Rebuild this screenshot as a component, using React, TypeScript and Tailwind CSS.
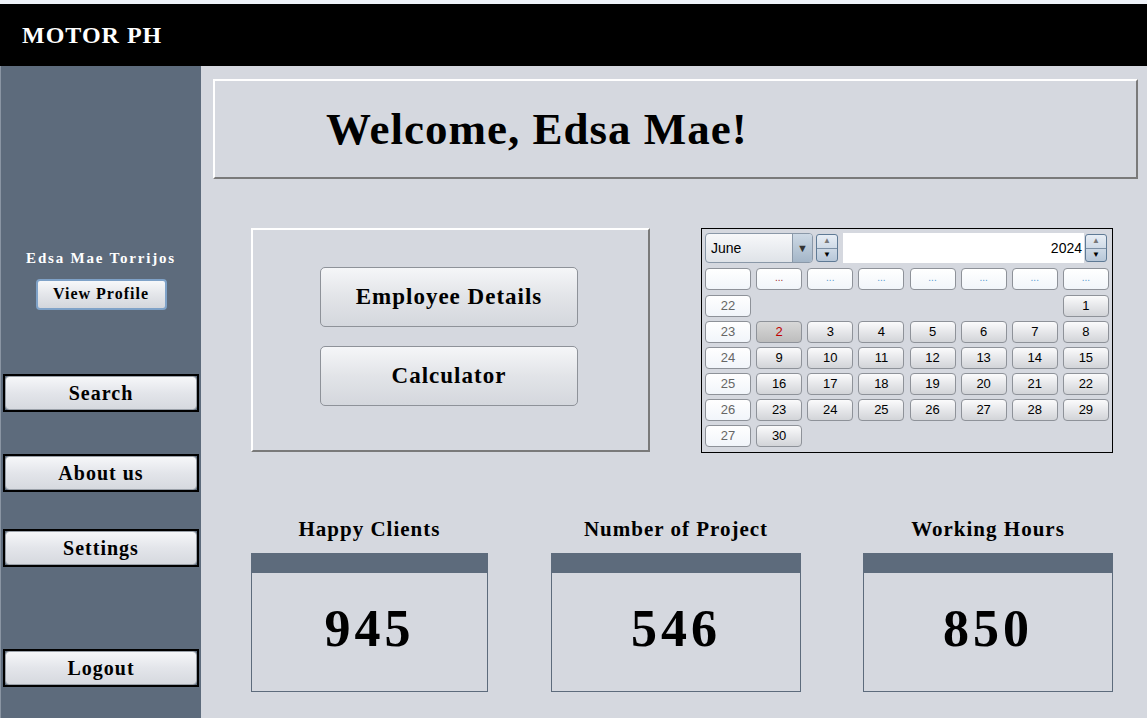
import React from "react";

const serif = { fontFamily: '"Liberation Serif", "DejaVu Serif", serif' };
const sans = { fontFamily: '"Liberation Sans", Arial, sans-serif' };

const days = [
  [null, null, null, null, null, null, 1],
  [2, 3, 4, 5, 6, 7, 8],
  [9, 10, 11, 12, 13, 14, 15],
  [16, 17, 18, 19, 20, 21, 22],
  [23, 24, 25, 26, 27, 28, 29],
  [30, null, null, null, null, null, null],
];
const weeks = [22, 23, 24, 25, 26, 27];

function SideButton({ label, className }: { label: string; className?: string }) {
  return (
    <div className={`mx-[2px] h-[38px] border-2 border-black ${className ?? ""}`}>
      <div className="flex h-full items-center justify-center rounded-[4px] border border-[#9aa0a8] bg-gradient-to-b from-[#f6f7f9] via-[#e3e5ea] to-[#d6d9df] text-[20px] font-bold tracking-[1px] text-black">
        {label}
      </div>
    </div>
  );
}

function DayCell({ value, kind }: { value: React.ReactNode; kind: "week" | "head" | "day" | "today" | "empty" }) {
  if (kind === "empty") return <div className="h-[22px] w-[46px]" />;
  const base = "flex h-[22px] w-[46px] items-center justify-center rounded-[4px] border border-[#8e9299] text-[13px]";
  const styles = {
    week: "bg-gradient-to-b from-white to-[#f1f5fa] text-[#666]",
    head: "bg-gradient-to-b from-white to-[#f1f5fa] text-[#5a9bd0]",
    day: "bg-gradient-to-b from-[#fbfbfc] via-[#e6e7ea] to-[#d2d4d8] text-black",
    today: "bg-gradient-to-b from-[#d8d8d8] to-[#bdbdbd] text-[#c00000]",
  } as const;
  return <div className={`${base} ${styles[kind]}`}>{value}</div>;
}

function Spinner() {
  return (
    <div className="flex h-[28px] w-[22px] flex-col overflow-hidden rounded-[3px] border border-[#5f7a95] bg-gradient-to-b from-[#e8eef5] to-[#b7c7d8]">
      <div className="flex flex-1 items-center justify-center text-[8px] leading-none text-[#777]">▲</div>
      <div className="h-px bg-[#7d90a5]" />
      <div className="flex flex-1 items-center justify-center text-[8px] leading-none text-black">▼</div>
    </div>
  );
}

function Calendar() {
  return (
    <div className="ml-[51px] h-[225px] w-[412px] border border-black bg-[#d5d8df] px-[3px] pt-[4px]" style={sans}>
      <div className="flex items-center">
        <div className="flex h-[30px] w-[108px] items-center overflow-hidden rounded-[4px] border border-[#8a98a8] bg-gradient-to-b from-[#f7f8fa] to-[#dfe3e8]">
          <span className="flex-1 pl-[5px] text-[14px] text-black">June</span>
          <div className="flex h-full w-[20px] items-center justify-center border-l border-[#8a98a8] bg-gradient-to-b from-[#cdd9e5] to-[#a4b6c8] text-[11px] text-[#333]">▼</div>
        </div>
        <div className="ml-[3px]"><Spinner /></div>
        <div className="ml-[5px] flex h-[30px] flex-1 items-center justify-end bg-white pr-[2px] text-[14px] text-black">2024</div>
        <div className="ml-[1px] mr-[2px]"><Spinner /></div>
      </div>
      <div className="mt-[5px] grid grid-cols-8 gap-x-[5px] gap-y-[4px]">
        <DayCell kind="week" value="" />
        {Array.from({ length: 7 }).map((_, i) => (
          <DayCell key={i} kind="head" value={<span className={`-mt-[3px] text-[10px] ${i === 0 ? "text-[#a03030]" : ""}`}>...</span>} />
        ))}
      </div>
      <div className="mt-[5px] grid grid-cols-8 gap-x-[5px] gap-y-[4px]">
        {days.map((row, r) => (
          <React.Fragment key={r}>
            <DayCell kind="week" value={weeks[r]} />
            {row.map((d, c) =>
              d === null ? (
                <DayCell key={c} kind="empty" value="" />
              ) : (
                <DayCell key={c} kind={d === 2 ? "today" : "day"} value={d} />
              )
            )}
          </React.Fragment>
        ))}
      </div>
    </div>
  );
}

function Stat({ label, value, width }: { label: string; value: string; width: string }) {
  return (
    <div className={`flex flex-col ${width}`}>
      <div className="h-[38px] pt-[4px] text-center text-[21px] font-bold leading-none tracking-[1px] text-black">{label}</div>
      <div className="flex h-[139px] flex-col border border-[#5d6b7c]">
        <div className="h-[19px] bg-[#5d6b7c]" />
        <div className="flex flex-1 items-center justify-center pb-[6px] text-[52px] font-bold tracking-[4px] text-black">{value}</div>
      </div>
    </div>
  );
}

export default function App() {
  return (
    <div className="flex h-[718px] w-[1147px] flex-col overflow-hidden bg-[#eef2f9]" style={serif}>
      {/* header */}
      <div className="mt-[4px] flex h-[62px] shrink-0 items-center bg-black pl-[22px]">
        <span className="text-[24px] font-bold tracking-[1px] text-white">MOTOR PH</span>
      </div>

      <div className="flex flex-1">
        {/* sidebar */}
        <div className="flex w-[201px] shrink-0 flex-col border-l border-[#8a95a3] bg-[#5d6b7c]">
          <div className="mt-[181px] text-center text-[15px] font-bold tracking-[1.8px] text-white">Edsa Mae Torrijos</div>
          <div className="mt-[9px] flex justify-center">
            <div className="flex h-[31px] w-[131px] items-center justify-center rounded-[4px] border-2 border-[#7fa2c8] bg-gradient-to-b from-[#f7f8fa] via-[#e4e6ea] to-[#d3d6dc] text-[16px] font-bold tracking-[1px] text-black">
              View Profile
            </div>
          </div>
          <SideButton label="Search" className="mt-[64px]" />
          <SideButton label="About us" className="mt-[42px]" />
          <SideButton label="Settings" className="mt-[37px]" />
          <SideButton label="Logout" className="mt-[82px]" />
        </div>

        {/* main */}
        <div className="flex flex-1 flex-col bg-[#d5d8df]">
          <div className="ml-[12px] mt-[13px] flex h-[100px] w-[925px] items-center border-2 border-b-[#7a7a7a] border-l-white border-r-[#7a7a7a] border-t-white pl-[111px]">
            <h1 className="text-[45px] font-bold leading-none tracking-[1px] text-black">Welcome, Edsa Mae!</h1>
          </div>

          <div className="mt-[49px] flex">
            <div className="ml-[50px] flex h-[224px] w-[399px] flex-col items-center border-2 border-b-[#7a7a7a] border-l-white border-r-[#7a7a7a] border-t-white pr-[3px] pt-[37px]">
              <div className="flex h-[60px] w-[258px] items-center justify-center rounded-[5px] border border-[#8e9299] bg-gradient-to-b from-[#f5f6f8] via-[#e2e4e8] to-[#d4d7dd] text-[23px] font-bold tracking-[1px] text-black">
                Employee Details
              </div>
              <div className="mt-[19px] flex h-[60px] w-[258px] items-center justify-center rounded-[5px] border border-[#8e9299] bg-gradient-to-b from-[#f5f6f8] via-[#e2e4e8] to-[#d4d7dd] text-[23px] font-bold tracking-[1px] text-black">
                Calculator
              </div>
            </div>
            <Calendar />
          </div>

          <div className="mt-[62px] flex">
            <div className="ml-[50px]"><Stat label="Happy Clients" value="945" width="w-[237px]" /></div>
            <div className="ml-[63px]"><Stat label="Number of Project" value="546" width="w-[250px]" /></div>
            <div className="ml-[62px]"><Stat label="Working Hours" value="850" width="w-[250px]" /></div>
          </div>
        </div>
      </div>
    </div>
  );
}
